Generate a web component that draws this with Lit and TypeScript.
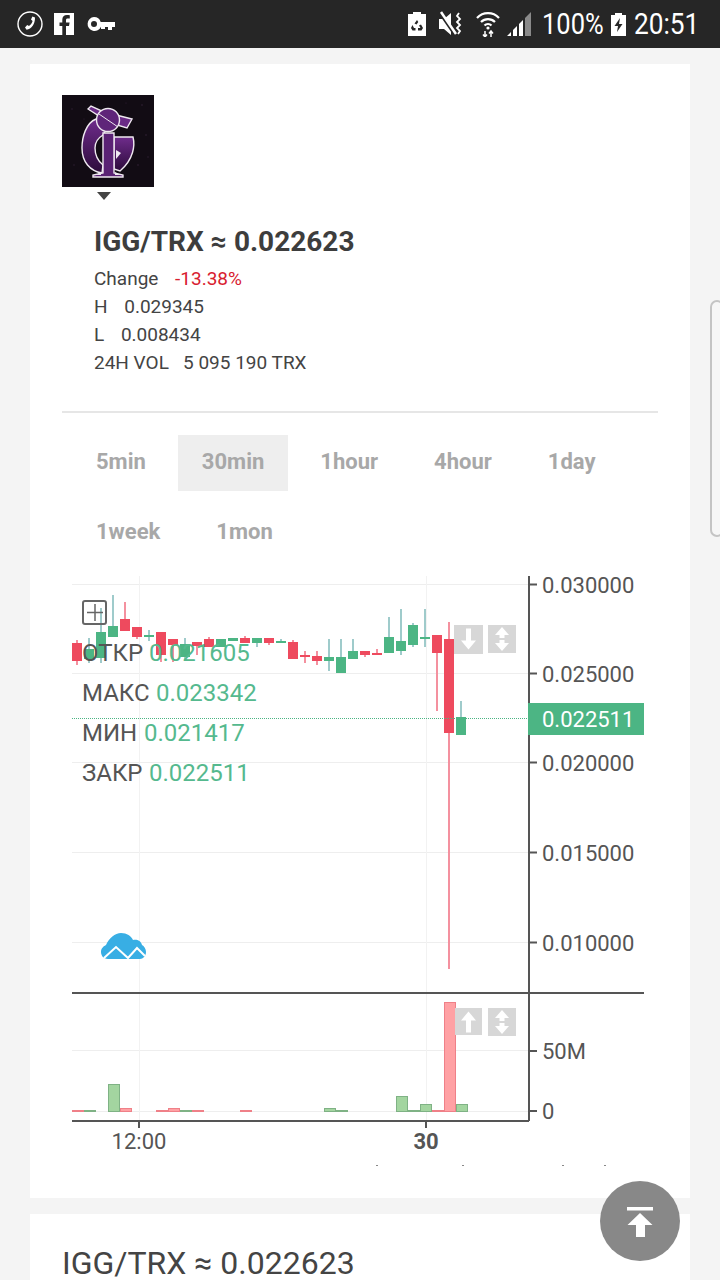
import { LitElement, html, svg, css } from "lit";
import { customElement } from "lit/decorators.js";

const R = "#ee4a5e", G = "#4cb584", RW = "#f4919f", GW = "#9fcbcb";
// dir, x, bodyTop, bodyBottom, wickTop, wickBottom
const candles: [number, number, number, number, number, number][] = [
  [0, 77, 643, 661, 640, 665], [1, 89, 649, 659, 638, 663], [1, 101, 632, 658, 608, 663],
  [1, 113, 626, 637, 595, 637], [0, 125, 619, 631, 602, 631], [0, 137, 627, 637, 627, 639],
  [1, 149, 635, 637, 630, 641], [0, 161, 632, 655, 632, 662], [0, 173, 639, 645, 639, 662],
  [1, 185, 644, 657, 638, 660], [0, 197, 642, 646, 642, 655], [0, 209, 639, 647, 637, 647],
  [1, 221, 639, 647, 639, 647], [1, 233, 638, 641, 638, 641], [0, 245, 638, 643, 636, 643],
  [1, 257, 638, 643, 638, 647], [0, 269, 638, 643, 638, 645], [1, 281, 641, 643, 639, 643],
  [0, 293, 642, 659, 640, 659], [0, 305, 655, 657, 651, 663], [0, 317, 656, 661, 651, 665],
  [1, 329, 657, 661, 639, 671], [1, 341, 657, 673, 639, 673], [1, 353, 651, 659, 639, 659],
  [0, 365, 651, 655, 651, 657], [0, 377, 653, 655, 649, 655], [1, 389, 637, 653, 617, 653],
  [1, 401, 641, 651, 609, 655], [1, 413, 625, 645, 623, 647], [1, 425, 637, 639, 609, 647],
  [0, 437, 635, 653, 635, 711], [0, 449, 639, 733, 622, 969], [1, 461, 717, 735, 701, 735],
];
// dir, left x, top y
const volumes: [number, number, number][] = [
  [0, 72, 1110], [1, 84, 1110], [1, 96, 1111], [1, 108, 1084], [0, 120, 1108], [0, 132, 1111], [1, 144, 1111],
  [0, 156, 1110], [0, 168, 1108], [1, 180, 1110], [0, 192, 1110], [0, 204, 1111], [1, 216, 1111], [1, 228, 1111],
  [0, 240, 1110], [1, 252, 1111], [0, 264, 1111], [1, 276, 1111], [0, 288, 1111], [0, 300, 1111], [0, 312, 1111],
  [1, 324, 1108], [1, 336, 1110], [1, 348, 1111], [0, 360, 1111], [0, 372, 1111], [1, 384, 1111], [1, 396, 1096],
  [1, 408, 1110], [1, 420, 1104], [0, 432, 1110], [0, 444, 1002], [1, 456, 1104],
];
const priceTicks: [number, string][] = [[585, "0.030000"], [674, "0.025000"], [763, "0.020000"], [853, "0.015000"], [943, "0.010000"]];
const legend: [number, string, number, string][] = [
  [661, "ОТКР", 149, "0.021605"], [701, "МАКС", 156, "0.023342"], [741, "МИН", 144, "0.021417"], [781, "ЗАКР", 149, "0.022511"],
];

@customElement("app-root")
export class AppRoot extends LitElement {
  static styles = css`
    :host { display: block; position: relative; height: 1280px; overflow: hidden; background: #f4f4f4; font-family: Roboto, "Noto Sans", sans-serif; color: #444; }
    .status { height: 48px; background: #262626; display: flex; align-items: center; color: #fff; }
    .status svg { display: block; flex: none; }
    .left { display: flex; align-items: center; gap: 10px; margin-left: 17px; }
    .right { display: flex; align-items: center; margin-left: auto; }
    .narrow { display: inline-block; font-size: 30px; line-height: 48px; transform-origin: left center; white-space: nowrap; }
    .pct { width: 62px; margin-left: 9px; transform: scaleX(0.85); }
    .clock { width: 64px; margin: 0 22px 0 8px; transform: scaleX(0.875); }
    .card { background: #fff; margin: 16px 30px 0; padding: 31px 32px 0; }
    .main { height: 1103px; box-sizing: content-box; }
    .logo { display: block; width: 92px; height: 92px; }
    .caret { width: 0; height: 0; margin: 5px 0 0 35px; border: 7px solid transparent; border-top: 8px solid #444; border-bottom: 0; }
    .info { margin: 24px 0 0 32px; }
    .pair { font-size: 28px; font-weight: 700; line-height: 36px; color: #3d3d3d; white-space: nowrap; }
    .stat { font-size: 19px; line-height: 28px; color: #444; white-space: pre; }
    .stats { margin-top: 5px; }
    .v { margin-left: 2.5px; }
    .down { color: #d8202f; }
    .divider { height: 2px; background: #e6e6e6; margin-top: 34px; }
    .tabs { display: flex; flex-wrap: wrap; gap: 14px 8px; margin: 22px 0 0 10px; }
    .tab { height: 56px; line-height: 53px; padding: 0 24px; font-size: 22px; font-weight: 700; color: #a8a8a8; }
    .tab.on { background: #eee; }
    .chart { display: block; margin-top: 9px; overflow: hidden; }
    .axis { font-family: Roboto, sans-serif; font-size: 22px; fill: #555; }
    .bold { font-weight: 700; }
    .legend { font-family: Roboto, sans-serif; font-size: 24px; fill: #555; }
    .val { fill: #55b98e; }
    .last { font-family: Roboto, sans-serif; font-size: 22px; fill: #fff; }
    .second { padding-top: 33px; height: 33px; }
    .pair2 { font-size: 32px; line-height: 33px; color: #444; white-space: nowrap; }
    .fab { position: absolute; left: 600px; top: 1181px; width: 80px; height: 80px; border-radius: 50%; background: rgba(126, 126, 126, 0.92); display: flex; align-items: center; justify-content: center; }
    .handle { position: absolute; left: 710px; top: 300px; width: 14px; height: 237px; box-sizing: border-box; border: 2px solid #c4c4c4; border-radius: 14px; background: #f6f6f6; }
  `;

  private status() {
    return html`<div class="status">
      <div class="left">
        <svg width="26" height="26" viewBox="0 0 26 26"><circle cx="13" cy="13" r="12" fill="none" stroke="#fff" stroke-width="1.4"/><path d="M18 6.500l-2.600-1-1.400 3 1.600 1.600c-.6 2-2 4-3.600 5l-1.800-1-2.200 2.400 1.600 2.200c5-.4 8.600-6 8.400-12.200z" fill="#fff"/></svg>
        <svg width="22" height="24" viewBox="0 0 22 24"><path d="M1 1h20v22h-8v-9h3l.6-3.600H13V8.200c0-1 .4-1.700 1.800-1.700h2V3.200C16 3.100 15 3 14 3c-3 0-4.700 1.800-4.700 4.800v2.600H6.500V14h2.800v9H1z" fill="#fff"/></svg>
        <svg width="30" height="18" viewBox="0 0 30 18" style="margin-left:1px"><path fill-rule="evenodd" d="M8 2a7 7 0 0 1 6.700 5H29v5h-3v3h-4v-3h-3v2h-4v-2.200A7 7 0 1 1 8 2zm0 4a3 3 0 1 0 0 6 3 3 0 0 0 0-6z" fill="#fff"/></svg>
      </div>
      <div class="right">
        <svg width="18" height="24" viewBox="0 0 18 24"><path fill-rule="evenodd" d="M5 0h8v2h5v22H0V2h5zM9 8l-2.500 3.500 2 1 1.800-2.500zM4.500 13l-1.500 3 1.500 2.500h3v-2.500h-1.500zM13 12.500l-2 1 1.500 2.500h-2.500v2.500h3.500l1.500-2.500z" fill="#fff"/></svg>
        <svg width="24" height="26" viewBox="0 0 24 26" style="margin-left:13px"><path d="M0 8h5l7-6v22l-7-6H0z" fill="#fff"/><path d="M1 2l15 22" stroke="#262626" stroke-width="3"/><path d="M2 1l15 22" stroke="#fff" stroke-width="2.500"/><path d="M20 2l-2 3 3 3-3 3 3 3-3 3 3 3-2 3" stroke="#fff" stroke-width="1.800" fill="none"/></svg>
        <svg width="24" height="26" viewBox="0 0 24 26" style="margin-left:13px"><g fill="none" stroke="#fff" stroke-width="2.200"><path d="M1 7a15 15 0 0 1 22 0"/><path d="M5 11a10 10 0 0 1 14 0"/><path d="M8.500 14.500a5 5 0 0 1 7 0"/></g><circle cx="12" cy="17" r="1.600" fill="#fff"/><path d="M9 20v6M7 23.500l2 2.500 2-2.500M15 26v-6M13 22.500l2-2.500 2 2.500" stroke="#fff" stroke-width="1.500" fill="none"/></svg>
        <svg width="26" height="26" viewBox="0 0 26 26" style="margin-left:7px"><path d="M0 25L4 21V25zM6 19l4-4V25H6zM12 13l4-4V25h-4z" fill="#fff"/><path d="M18 7l6-6V25h-6z" fill="#8a8a8a"/></svg>
        <span class="narrow pct">100%</span>
        <svg width="15" height="23" viewBox="0 0 15 23" style="margin-left:7px"><path fill-rule="evenodd" d="M4 0h7v2h4v21H0V2h4zM9 5L3.500 13H7l-1 6 5.500-8H8z" fill="#fff"/></svg>
        <span class="narrow clock">20:51</span>
      </div>
    </div>`;
  }

  private logo() {
    const o = "#efe9f0";
    return html`<svg class="logo" viewBox="0 0 92 92">
      <defs><linearGradient id="pg" x1="0" y1="0" x2="0" y2="1"><stop offset="0" stop-color="#6f2c8c"/><stop offset="1" stop-color="#2c0b3a"/></linearGradient></defs>
      <rect width="92" height="92" fill="#120c14"/>
      <g fill="#4a3050" opacity=".6"><circle cx="10" cy="14" r=".7"/><circle cx="80" cy="10" r=".8"/><circle cx="84" cy="40" r=".8"/><circle cx="12" cy="70" r=".7"/><circle cx="22" cy="24" r=".6"/><circle cx="76" cy="70" r=".8"/><circle cx="64" cy="8" r=".6"/><circle cx="86" cy="62" r=".7"/></g>
      <path d="M34 24C24 28 20 42 20 53c0 14 8 23 20 25l1-8c-5-4-8-10-8-17 0-6 3-10 8-13l3-5z" fill="url(#pg)" stroke=${o} stroke-width="1.400"/>
      <path d="M52 42H71c2 8 1 22-13 34l-6-2z" fill="url(#pg)" stroke=${o} stroke-width="1.400"/>
      <path d="M54 64l5-6-5-3z" fill=${o}/>
      <path d="M41 38H52V78l9 2v2H31v-2l10-2z" fill="#5a2274" stroke=${o} stroke-width="1.400"/>
      <path d="M34 80l5-3v3zM58 80l-5-3v3z" fill=${o}/>
      <path d="M26 14l3-3 11 5-3 5zM54 20l16 4-5 9-10-3z" fill="#6a2b86" stroke=${o} stroke-width="1.400"/>
      <circle cx="46" cy="25" r="11.500" fill="#5f2579" stroke=${o} stroke-width="1.400"/>
      <path d="M37 19l19 13" stroke=${o} stroke-width="1"/>
    </svg>`;
  }

  private chart() {
    const btn = (x: number, y: number, s: number, kind: string) => svg`
      <rect x=${x} y=${y} width=${s} height=${s} fill="#d7d7d7"/>
      <g fill="#fff" transform="translate(${x + s / 2} ${y + s / 2})">
        ${kind === "down" ? svg`<path d="M-2.500-11h5v12H7.500L0 10-7.500 1H-2.500z"/>` : kind === "up" ? svg`<path d="M-2.500 11h5V-1H7.500L0-10-7.500-1H-2.500z"/>` : svg`<path d="M0-12L7-4H2.500V4H7L0 12-7 4H-2.500V-4H-7z"/><path d="M-6 0H6" stroke="#d7d7d7" stroke-width="2"/>`}
      </g>`;
    return html`<svg class="chart" width="596" height="600" viewBox="62 570 596 600">
      ${priceTicks.map(([y]) => svg`<path d="M72 ${y - 0.5}H528" stroke="#eee"/>`)}
      <path d="M72 1050.500H528M72 1111.500H528" stroke="#eee"/>
      <path d="M139.500 576V1120M426.500 576V1120" stroke="#f2f2f2"/>
      ${candles.map(([d, x, t, b, wt, wb]) => svg`
        <rect x=${x - 1} y=${wt} width="2" height=${wb - wt} fill=${d ? GW : RW}/>
        <rect x=${x - 5} y=${t} width="10" height=${Math.max(b - t, 2)} fill=${d ? G : R}/>`)}
      <path d="M72 718.500H528" stroke=${G} stroke-dasharray="1 1"/>
      ${volumes.map(([d, x, y]) => svg`<rect x=${x + .5} y=${y + .5} width="11" height=${1111 - y} fill=${d ? "#a3d5a0" : "#ffa1a4"} stroke=${d ? "#7fb285" : "#ef8088"} stroke-width="1"/>`)}
      <path d="M529 576V1121M72 993H644M72 1121H529" stroke="#555" stroke-width="2" fill="none"/>
      ${[...priceTicks.map(([y]) => y - 0.5), 1051, 1111].map((y) => svg`<path d="M529 ${y}H537" stroke="#555" stroke-width="2"/>`)}
      <path d="M139 1121v7M426 1121v7" stroke="#555" stroke-width="2"/>
      ${priceTicks.map(([y, t]) => svg`<text class="axis" x="542" y=${y + 8}>${t}</text>`)}
      <text class="axis" x="542" y="1059">50M</text>
      <text class="axis" x="542" y="1119">0</text>
      <text class="axis" x="139" y="1149" text-anchor="middle">12:00</text>
      <text class="axis bold" x="426" y="1149" text-anchor="middle">30</text>
      <rect x="528" y="703" width="116" height="32" fill=${G}/>
      <text class="last" x="542" y="727">0.022511</text>
      ${btn(454, 625, 29, "down")}${btn(488, 625, 28, "both")}
      ${btn(455, 1008, 27, "up")}${btn(488, 1008, 28, "both")}
      <rect x="83" y="601" width="23" height="23" rx="2" fill="none" stroke="#666" stroke-width="2"/>
      <path d="M87 612.500H103M95 604V621" stroke="#666" stroke-width="1.500"/>
      ${legend.map(([y, l, vx, v]) => svg`<text class="legend" x="82" y=${y}>${l}</text><text class="legend val" x=${vx} y=${y}>${v}</text>`)}
      <path fill="#38aee4" d="M108 959c-5 0-7-4-7-7 0-4 3-6 5-7 3-7 9-12 15-12 6 0 10 3 12 7 3-1 8 0 9 5 2 1 4 4 4 7 0 4-3 7-6 7z"/>
      <path d="M104 958l12-11 12 11 9-10 8 8" fill="none" stroke="#fff" stroke-width="2"/>
      <g fill="#888"><rect x="376" y="1165" width="2" height="1"/><rect x="462" y="1165" width="2" height="1"/><rect x="562" y="1165" width="2" height="1"/><rect x="604" y="1165" width="2" height="1"/></g>
    </svg>`;
  }

  render() {
    return html`
      ${this.status()}
      <div class="card main">
        ${this.logo()}
        <div class="caret"></div>
        <div class="info">
          <div class="pair">IGG/TRX ≈ 0.022623</div>
          <div class="stats">
            <div class="stat">Change   <span class="down v">-13.38%</span></div>
            <div class="stat">H   <span class="v">0.029345</span></div>
            <div class="stat">L   <span class="v">0.008434</span></div>
            <div class="stat">24H VOL   5 095 190 TRX</div>
          </div>
        </div>
        <div class="divider"></div>
        <div class="tabs">
          ${["5min", "30min", "1hour", "4hour", "1day", "1week", "1mon"].map((t) => html`<div class="tab ${t === "30min" ? "on" : ""}">${t}</div>`)}
        </div>
        ${this.chart()}
      </div>
      <div class="card second"><div class="pair2">IGG/TRX ≈ 0.022623</div></div>
      <div class="handle"></div>
      <div class="fab">
        <svg width="30" height="32" viewBox="0 0 30 32"><path d="M2 2h26v3.500H2zM15 8L27.500 20H20v12h-9V20H2.500z" fill="#fff"/></svg>
      </div>
    `;
  }
}
